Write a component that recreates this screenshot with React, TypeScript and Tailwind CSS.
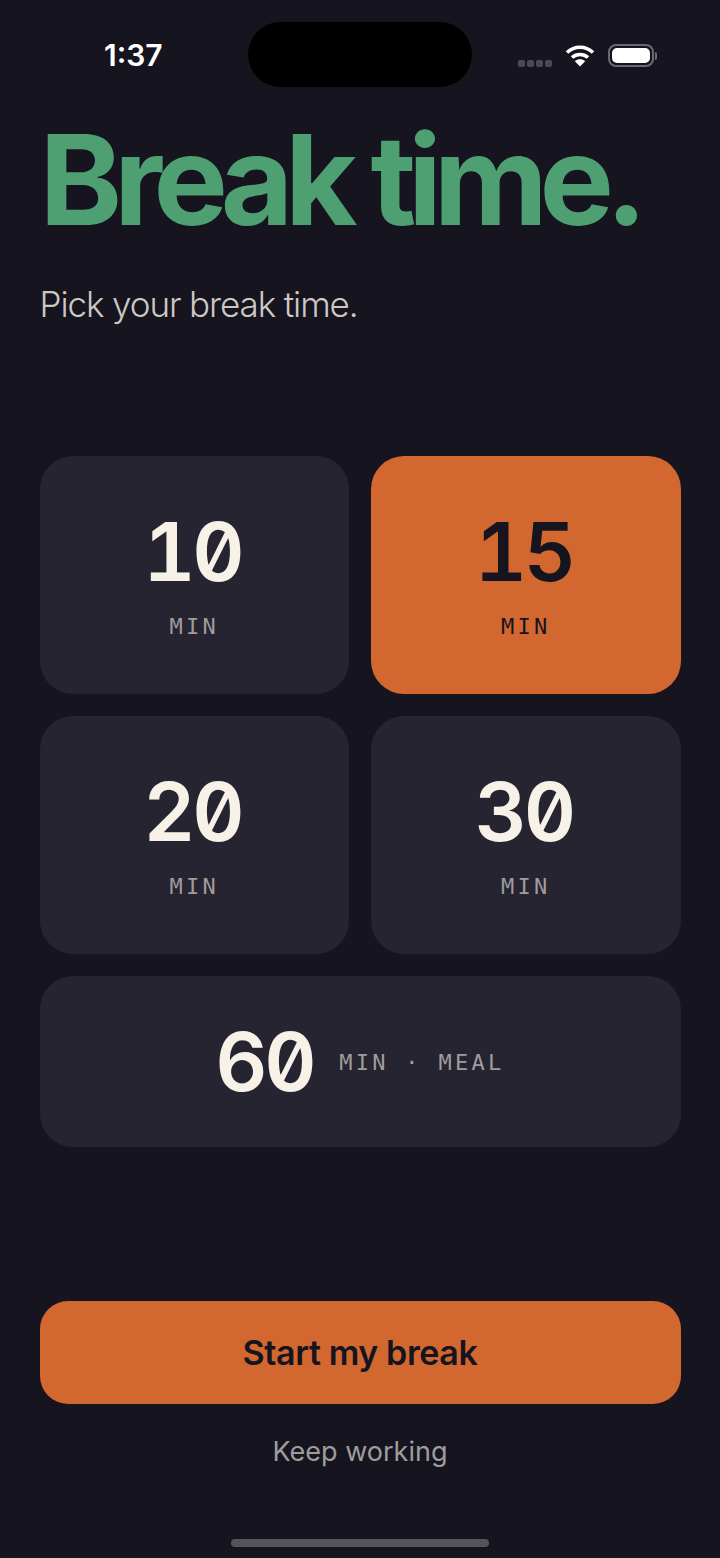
function Option({ value, active }: { value: string; active?: boolean }) {
    return (
        <div className={`flex h-[238px] flex-col items-center rounded-[33px] pt-[52px] ${active ? 'bg-[#d2672f]' : 'bg-[#252430]'}`}>
            <span className={`pr-[4px] text-[81px] leading-[88px] font-semibold tracking-[-3.5px] tabular-nums slashed-zero ${active ? 'text-[#15141f]' : 'text-[#f7f1e8]'}`}>{value}</span>
            <span className={`mt-[18px] font-['DejaVu_Sans_Mono',monospace] text-[22px] leading-[26px] tracking-[3.3px] ${active ? 'text-[#15141f]' : 'text-[#a09c9b]'}`}>MIN</span>
        </div>
    );
}

export default function App() {
    return (
        <div className="flex h-[1558px] w-[720px] flex-col overflow-hidden bg-[#15141f] font-['Inter',sans-serif]">
            {/* Status bar */}
            <div className="flex h-[87px] items-end justify-between pl-[104px] pr-[63px]">
                <span className="mb-[14px] w-[144px] text-[30px] leading-[36px] font-semibold text-white">1:37</span>
                <div className="h-[65px] w-[224px] rounded-[33px] bg-black" />
                <div className="mb-[20px] flex w-[185px] items-center justify-end gap-[13px]">
                    <div className="mt-[15px] mr-[1px] flex gap-[2px]">
                        <div className="h-[7px] w-[7px] rounded-[2px] bg-[#4b4a52]" />
                        <div className="h-[7px] w-[7px] rounded-[2px] bg-[#4b4a52]" />
                        <div className="h-[7px] w-[7px] rounded-[2px] bg-[#4b4a52]" />
                        <div className="h-[7px] w-[7px] rounded-[2px] bg-[#4b4a52]" />
                    </div>
                    <svg className="-ml-[1px]" width="30" height="23" viewBox="0 0 30 23" fill="none">
                        <path d="M2 8.5C9.5 1.5 20.5 1.5 28 8.5" stroke="white" strokeWidth="3.6" />
                        <path d="M7 13.5C11.5 9.5 18.5 9.5 23 13.5" stroke="white" strokeWidth="3.6" />
                        <path d="M15 22.5L9.8 17.2C13 14.6 17 14.6 20.2 17.2Z" fill="white" />
                    </svg>
                    <div className="flex items-center gap-[1px]">
                        <div className="h-[23px] w-[46px] rounded-[8px] border-2 border-[#6a6970] p-[2px]">
                            <div className="h-full w-full rounded-[5px] bg-white" />
                        </div>
                        <div className="h-[8px] w-[2px] rounded-r-full bg-[#6a6970]" />
                    </div>
                </div>
            </div>

            <main className="flex flex-1 flex-col px-[39.5px]">
                <h1 className="mt-[28px] text-[125px] leading-[130px] font-bold tracking-[-8.3px] whitespace-nowrap text-[#4e9f72]">Break time.</h1>
                <p className="mt-[39px] text-[35px] leading-[41px] font-light tracking-[-1.1px] text-[#cdc8c2]">Pick your break time.</p>

                <div className="mt-[131px] grid grid-cols-2 gap-[22px]">
                    <Option value="10" />
                    <Option value="15" active />
                    <Option value="20" />
                    <Option value="30" />
                    <div className="col-span-2 flex h-[171px] items-center justify-center gap-[26px] rounded-[33px] bg-[#252430]">
                        <span className="text-[81px] leading-[88px] font-semibold tracking-[-3.5px] tabular-nums slashed-zero text-[#f7f1e8]">60</span>
                        <span className="mt-[2px] font-['DejaVu_Sans_Mono',monospace] text-[22px] leading-[26px] tracking-[3.3px] whitespace-pre text-[#a09c9b]">MIN · MEAL</span>
                    </div>
                </div>

                <button className="mt-[154px] h-[103px] rounded-[28px] bg-[#d2672f] text-[34px] font-semibold tracking-[-0.4px] text-[#15141f]">Start my break</button>
                <p className="mt-[28px] text-center text-[27px] leading-[40px] text-[#a09c9b]">Keep working</p>
            </main>

            <div className="mx-auto mb-[11px] h-[8px] w-[258px] rounded-full bg-[#55545b]" />
        </div>
    );
}
